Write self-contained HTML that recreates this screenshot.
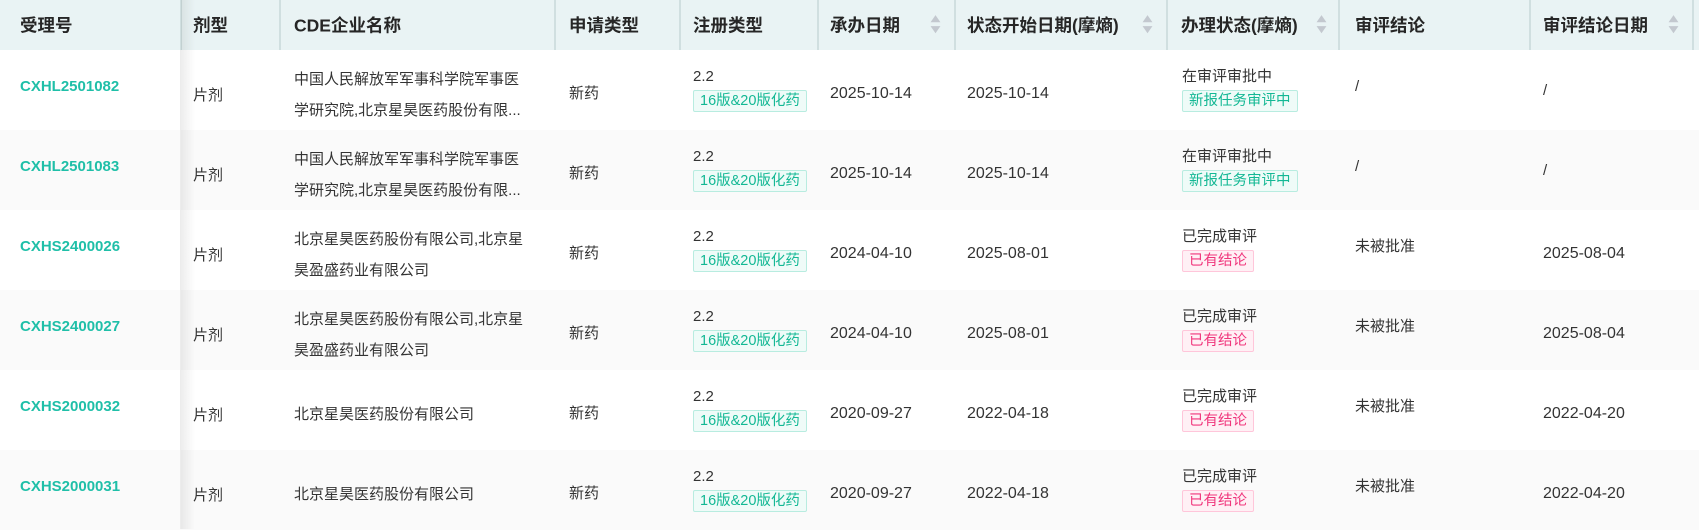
<!DOCTYPE html>
<html><head><meta charset="utf-8"><style>
*{margin:0;padding:0;box-sizing:border-box}
body{width:1699px;height:529px;overflow:hidden;background:#fff;font-family:"Liberation Sans","Noto Sans CJK SC",sans-serif;color:#333;font-size:15px;position:relative}
.hd{position:absolute;left:0;top:0;width:1699px;height:50px;background:#e9f3f4}
.h{position:absolute;top:25px;transform:translateY(-50%);font-weight:bold;font-size:17.5px;color:#262626;white-space:nowrap}
.sep{position:absolute;top:0;width:2px;height:50px;background:#d0dfe0}
.sort{position:absolute;top:15px;width:11px;height:19px}
.row{position:absolute;left:0;width:1699px;height:80px}
.g{background:#fafafa}
.c{position:absolute;transform:translateY(-50%);white-space:nowrap;line-height:20px}
.d{font-size:16px}
.id{color:#1fbfa8;font-weight:bold;font-size:15px}
.tag{position:absolute;height:22px;line-height:20px;border:1px solid;border-radius:2px;font-size:14.5px;padding:0 6px;white-space:nowrap}
.tg{color:#13b894;background:#effbf8;border-color:#b8ece0}
.tp{color:#f0357c;background:#fff0f5;border-color:#ffc6da}
.shadow{position:absolute;left:181px;top:0;width:14px;height:529px;background:linear-gradient(to right,rgba(0,0,0,0.07),rgba(0,0,0,0));z-index:3}
.fixline{position:absolute;left:180px;top:50px;width:1px;height:479px;background:#ececec;z-index:3}
</style></head><body>
<div class="hd">
<div class="h" style="left:20px">受理号</div>
<div class="h" style="left:193px">剂型</div>
<div class="h" style="left:294px">CDE企业名称</div>
<div class="h" style="left:569px">申请类型</div>
<div class="h" style="left:693px">注册类型</div>
<div class="h" style="left:830px">承办日期</div>
<div class="h" style="left:967px">状态开始日期(摩熵)</div>
<div class="h" style="left:1181px">办理状态(摩熵)</div>
<div class="h" style="left:1355px">审评结论</div>
<div class="h" style="left:1543px">审评结论日期</div>
<div class="sep" style="left:180px"></div><div class="sep" style="left:279px"></div><div class="sep" style="left:554px"></div><div class="sep" style="left:679px"></div><div class="sep" style="left:817px"></div><div class="sep" style="left:954px"></div><div class="sep" style="left:1166px"></div><div class="sep" style="left:1338px"></div><div class="sep" style="left:1529px"></div><div class="sep" style="left:1692px"></div>
<svg class="sort" style="left:930px" viewBox="0 0 10 17"><path d="M5 0L9.5 6.5H0.5Z M0.5 10H9.5L5 16.5Z" fill="#c3c8cf"/></svg>
<svg class="sort" style="left:1142px" viewBox="0 0 10 17"><path d="M5 0L9.5 6.5H0.5Z M0.5 10H9.5L5 16.5Z" fill="#c3c8cf"/></svg>
<svg class="sort" style="left:1316px" viewBox="0 0 10 17"><path d="M5 0L9.5 6.5H0.5Z M0.5 10H9.5L5 16.5Z" fill="#c3c8cf"/></svg>
<svg class="sort" style="left:1668px" viewBox="0 0 10 17"><path d="M5 0L9.5 6.5H0.5Z M0.5 10H9.5L5 16.5Z" fill="#c3c8cf"/></svg>
</div>

<div class="row" style="top:50px">
<div class="c id" style="left:20px;top:37px">CXHL2501082</div>
<div class="c" style="left:193px;top:46px">片剂</div>
<div class="c" style="left:294px;top:30px">中国人民解放军军事科学院军事医</div>
<div class="c" style="left:294px;top:61px">学研究院,北京星昊医药股份有限...</div>
<div class="c" style="left:569px;top:44px">新药</div>
<div class="c" style="left:693px;top:27px">2.2</div>
<div class="tag tg" style="left:693px;top:40px">16版&amp;20版化药</div>
<div class="c d" style="left:830px;top:44px">2025-10-14</div>
<div class="c d" style="left:967px;top:44px">2025-10-14</div>
<div class="c" style="left:1182px;top:27px">在审评审批中</div>
<div class="tag tg" style="left:1182px;top:40px">新报任务审评中</div>
<div class="c" style="left:1355px;top:37px">/</div>
<div class="c" style="left:1543px;top:41px">/</div>
</div>

<div class="row g" style="top:130px">
<div class="c id" style="left:20px;top:37px">CXHL2501083</div>
<div class="c" style="left:193px;top:46px">片剂</div>
<div class="c" style="left:294px;top:30px">中国人民解放军军事科学院军事医</div>
<div class="c" style="left:294px;top:61px">学研究院,北京星昊医药股份有限...</div>
<div class="c" style="left:569px;top:44px">新药</div>
<div class="c" style="left:693px;top:27px">2.2</div>
<div class="tag tg" style="left:693px;top:40px">16版&amp;20版化药</div>
<div class="c d" style="left:830px;top:44px">2025-10-14</div>
<div class="c d" style="left:967px;top:44px">2025-10-14</div>
<div class="c" style="left:1182px;top:27px">在审评审批中</div>
<div class="tag tg" style="left:1182px;top:40px">新报任务审评中</div>
<div class="c" style="left:1355px;top:37px">/</div>
<div class="c" style="left:1543px;top:41px">/</div>
</div>

<div class="row" style="top:210px">
<div class="c id" style="left:20px;top:37px">CXHS2400026</div>
<div class="c" style="left:193px;top:46px">片剂</div>
<div class="c" style="left:294px;top:30px">北京星昊医药股份有限公司,北京星</div>
<div class="c" style="left:294px;top:61px">昊盈盛药业有限公司</div>
<div class="c" style="left:569px;top:44px">新药</div>
<div class="c" style="left:693px;top:27px">2.2</div>
<div class="tag tg" style="left:693px;top:40px">16版&amp;20版化药</div>
<div class="c d" style="left:830px;top:44px">2024-04-10</div>
<div class="c d" style="left:967px;top:44px">2025-08-01</div>
<div class="c" style="left:1182px;top:27px">已完成审评</div>
<div class="tag tp" style="left:1182px;top:40px">已有结论</div>
<div class="c" style="left:1355px;top:37px">未被批准</div>
<div class="c d" style="left:1543px;top:44px">2025-08-04</div>
</div>

<div class="row g" style="top:290px">
<div class="c id" style="left:20px;top:37px">CXHS2400027</div>
<div class="c" style="left:193px;top:46px">片剂</div>
<div class="c" style="left:294px;top:30px">北京星昊医药股份有限公司,北京星</div>
<div class="c" style="left:294px;top:61px">昊盈盛药业有限公司</div>
<div class="c" style="left:569px;top:44px">新药</div>
<div class="c" style="left:693px;top:27px">2.2</div>
<div class="tag tg" style="left:693px;top:40px">16版&amp;20版化药</div>
<div class="c d" style="left:830px;top:44px">2024-04-10</div>
<div class="c d" style="left:967px;top:44px">2025-08-01</div>
<div class="c" style="left:1182px;top:27px">已完成审评</div>
<div class="tag tp" style="left:1182px;top:40px">已有结论</div>
<div class="c" style="left:1355px;top:37px">未被批准</div>
<div class="c d" style="left:1543px;top:44px">2025-08-04</div>
</div>

<div class="row" style="top:370px">
<div class="c id" style="left:20px;top:37px">CXHS2000032</div>
<div class="c" style="left:193px;top:46px">片剂</div>
<div class="c" style="left:294px;top:45px">北京星昊医药股份有限公司</div>
<div class="c" style="left:569px;top:44px">新药</div>
<div class="c" style="left:693px;top:27px">2.2</div>
<div class="tag tg" style="left:693px;top:40px">16版&amp;20版化药</div>
<div class="c d" style="left:830px;top:44px">2020-09-27</div>
<div class="c d" style="left:967px;top:44px">2022-04-18</div>
<div class="c" style="left:1182px;top:27px">已完成审评</div>
<div class="tag tp" style="left:1182px;top:40px">已有结论</div>
<div class="c" style="left:1355px;top:37px">未被批准</div>
<div class="c d" style="left:1543px;top:44px">2022-04-20</div>
</div>

<div class="row g" style="top:450px">
<div class="c id" style="left:20px;top:37px">CXHS2000031</div>
<div class="c" style="left:193px;top:46px">片剂</div>
<div class="c" style="left:294px;top:45px">北京星昊医药股份有限公司</div>
<div class="c" style="left:569px;top:44px">新药</div>
<div class="c" style="left:693px;top:27px">2.2</div>
<div class="tag tg" style="left:693px;top:40px">16版&amp;20版化药</div>
<div class="c d" style="left:830px;top:44px">2020-09-27</div>
<div class="c d" style="left:967px;top:44px">2022-04-18</div>
<div class="c" style="left:1182px;top:27px">已完成审评</div>
<div class="tag tp" style="left:1182px;top:40px">已有结论</div>
<div class="c" style="left:1355px;top:37px">未被批准</div>
<div class="c d" style="left:1543px;top:44px">2022-04-20</div>
</div>

<div class="fixline"></div>
<div class="shadow"></div>
</body></html>
